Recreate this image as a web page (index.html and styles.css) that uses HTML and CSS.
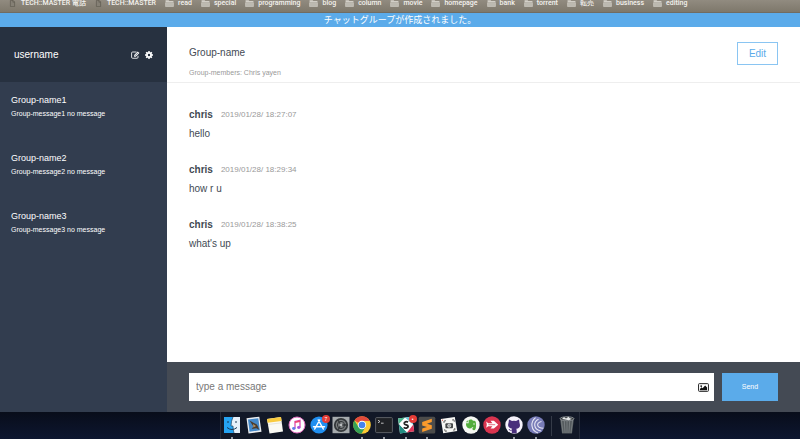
FILE: index.html
```html
<!DOCTYPE html>
<html lang="ja">
<head>
<meta charset="utf-8">
<meta name="viewport" content="width=device-width, initial-scale=1">
<title>ChatSpace</title>
<link rel="stylesheet" href="styles.css">
</head>
<body>
<svg class="defs" aria-hidden="true">
  <symbol id="folder" viewBox="0 0 10 8"><path d="M.5 1.2V.4h3.6l.6.8h4.8V2.4H.5z" fill="#d2cfc7"/><path d="M.5 3h9v4.5h-9z" fill="#bcb9b0" stroke="#dad7cf" stroke-width=".6"/></symbol>
  <symbol id="page" viewBox="0 0 7 9"><path d="M.8.5h3.4l2 2v6H.8z" fill="#858075" stroke="#5e5a50" stroke-width=".9"/><path d="M4 .5v2.3h2.2" fill="none" stroke="#5e5a50" stroke-width=".8"/></symbol>
</svg>

<nav class="bookmarks">
  <a href="#"><svg class="page"><use href="#page"/></svg>TECH::MASTER 電話</a>
  <a href="#"><svg class="page"><use href="#page"/></svg>TECH::MASTER</a>
  <a href="#"><svg><use href="#folder"/></svg>read</a>
  <a href="#"><svg><use href="#folder"/></svg>special</a>
  <a href="#"><svg><use href="#folder"/></svg>programming</a>
  <a href="#"><svg><use href="#folder"/></svg>blog</a>
  <a href="#"><svg><use href="#folder"/></svg>column</a>
  <a href="#"><svg><use href="#folder"/></svg>movie</a>
  <a href="#"><svg><use href="#folder"/></svg>homepage</a>
  <a href="#"><svg><use href="#folder"/></svg>bank</a>
  <a href="#"><svg><use href="#folder"/></svg>torrent</a>
  <a href="#"><svg><use href="#folder"/></svg>転売</a>
  <a href="#"><svg><use href="#folder"/></svg>business</a>
  <a href="#"><svg><use href="#folder"/></svg>editing</a>
</nav>

<p class="flash">チャットグループが作成されました。</p>

<div class="app">
  <aside class="sidebar">
    <header class="user">
      <span class="user-name">username</span>
      <a href="#" aria-label="New group"><svg class="compose-icon" viewBox="0 0 18 16"><path d="M14 9.5v3a2 2 0 0 1-2 2H3.2a2 2 0 0 1-2-2v-8.5a2 2 0 0 1 2-2H11" fill="none" stroke="#fff" stroke-width="1.7"/><path d="M6.2 11.4V8.2L13.6.8l3.3 3.3-7.4 7.3z" fill="#fff"/><path d="m8 9.6 6-6" stroke="#253141" stroke-width="1.3"/></svg></a>
      <a href="#" aria-label="Settings"><svg viewBox="0 0 16 16"><circle cx="8" cy="8" r="4.2" fill="none" stroke="#fff" stroke-width="3.6"/><path d="M8 0v3M8 13v3M0 8h3M13 8h3M2.4 2.4l2 2M11.6 11.6l2 2M2.4 13.6l2-2M11.6 4.4l2-2" stroke="#fff" stroke-width="3"/></svg></a>
    </header>
    <ul class="groups">
      <li><a href="#"><span class="group-name">Group-name1</span><span class="group-message">Group-message1 no message</span></a></li>
      <li><a href="#"><span class="group-name">Group-name2</span><span class="group-message">Group-message2 no message</span></a></li>
      <li><a href="#"><span class="group-name">Group-name3</span><span class="group-message">Group-message3 no message</span></a></li>
    </ul>
  </aside>

  <main class="chat">
    <header class="chat-header">
      <div>
        <h1>Group-name</h1>
        <p class="members">Group-members: Chris yayen</p>
      </div>
      <button type="button" class="edit">Edit</button>
    </header>
    <ul class="messages">
      <li><div class="meta"><span class="sender">chris</span><time>2019/01/28/ 18:27:07</time></div><p>hello</p></li>
      <li><div class="meta"><span class="sender">chris</span><time>2019/01/28/ 18:29:34</time></div><p>how r u</p></li>
      <li><div class="meta"><span class="sender">chris</span><time>2019/01/28/ 18:38:25</time></div><p>what's up</p></li>
    </ul>
    <form class="composer">
      <div class="field">
        <input type="text" aria-label="Message" placeholder="type a message">
        <button type="button" class="picture" aria-label="Attach image"><svg viewBox="0 0 20 16"><rect x="1" y="1" width="18" height="14" rx="1.5" fill="#fff" stroke="#222" stroke-width="1.8"/><circle cx="5.8" cy="5.4" r="1.7" fill="#111"/><path d="M3.5 13v-2.5l3-2.8 1.8 1.6L13 4.5l3.5 3.6V13z" fill="#111"/></svg></button>
      </div>
      <button type="submit" class="send">Send</button>
    </form>
  </main>
</div>

<footer class="desktop">
  <div class="dock">
    <div class="apps">
      <span class="app-icon running"><svg viewBox="0 0 18 18"><path d="M1 1h16v16H1z" fill="#e7f1fa"/><path d="M1 1h9Q8 5 8 10h2q0 4 1 7H1z" fill="#25a4f3"/><path d="M10 1Q8 5 8 10h2q0 4 1 7" fill="none" stroke="#24455f" stroke-width=".7"/><path d="M5 5v2M13 5v2M4 11.5q5 4 10 0" fill="none" stroke="#183650" stroke-width="1"/></svg></span>
      <span class="app-icon"><svg viewBox="0 0 18 18"><path d="M1.5 2.2 14.3.7l2.2 15L3.5 17.5z" fill="#eceff2"/><path d="m3 3.5 10.3-1.2 1.6 12L4.6 15.8z" fill="#4589c8"/><path d="m4.5 4.5 4 2.2 3 1.6 1.2 1.8 1.5 3.6-2.8-1.4-4.6.6 1.6-2.4z" fill="#4b3b2c"/><path d="m8 8 3 2-2.6 1.6z" fill="#b69361"/></svg></span>
      <span class="app-icon"><svg viewBox="0 0 18 18"><path d="m1 3 14-2 2 14.5L3.5 17.5z" fill="#fafaf4"/><path d="m1 3 14-2 .6 4L1.6 6.8z" fill="#f9cb3e"/><path d="m2 8.5 13.5-1.7" stroke="#d7d7cf" stroke-width=".6"/></svg></span>
      <span class="app-icon"><svg viewBox="0 0 18 18"><circle cx="9" cy="9" r="8" fill="#fff" stroke="#e26cc0" stroke-width="1"/><path d="M7 12.5V5.4l5-1.1v7.2" fill="none" stroke="#dc4aae" stroke-width="1.3"/><path d="M7 6.3l5-1.1" stroke="#ed456d" stroke-width="1.6"/><ellipse cx="5.8" cy="12.5" rx="1.7" ry="1.4" fill="#637bea"/><ellipse cx="10.8" cy="11.5" rx="1.7" ry="1.4" fill="#a850db"/></svg></span>
      <span class="app-icon"><svg viewBox="0 0 18 18"><circle cx="9" cy="9" r="8.6" fill="#208ff0"/><path d="m9.7 4-5 9M8.3 4l5 9M3.5 10.8h11" stroke="#fff" stroke-width="1.5" stroke-linecap="round"/></svg><span class="badge">7</span></span>
      <span class="app-icon"><svg viewBox="0 0 18 18"><path d="M.5.8h17v16.4H.5z" fill="#a6abae"/><circle cx="9" cy="9" r="6.2" fill="#777b7d" stroke="#34383b" stroke-width="1.8"/><circle cx="9" cy="9" r="3.6" fill="none" stroke="#33373a" stroke-width="1"/><path d="M9 9h6M9 9 6 4M9 9l-3 5" stroke="#33373a" stroke-width="1.3"/><circle cx="9" cy="9" r="1.4" fill="#b9bcbe"/></svg></span>
      <span class="app-icon running"><svg viewBox="0 0 18 18"><circle cx="9" cy="9" r="8.8" fill="#fbc933"/><path d="M9 9 1.4 4.6A8.8 8.8 0 0 1 16.8 5H9z" fill="#e24a3b"/><path d="M1.4 4.6A8.8 8.8 0 0 0 8.4 17.8L12.5 11 9 9 5.5 11z" fill="#35a156"/><circle cx="9" cy="9" r="4.2" fill="#fff"/><circle cx="9" cy="9" r="3.3" fill="#4483ed"/></svg></span>
      <span class="app-icon running"><svg viewBox="0 0 18 18"><rect x=".6" y="1.6" width="16.8" height="15" rx="1" fill="#202226" stroke="#6b6f73" stroke-width=".8"/><path d="m3 4.2 2 1.3-2 1.3M6 7.2h2.6" fill="none" stroke="#e6e6e6" stroke-width=".8"/></svg></span>
      <span class="app-icon running"><svg viewBox="0 0 18 18"><path d="m1 2.5 14-1.8 2.2 14.6L3 17.4z" fill="#fff"/><path d="m1 2.5 7-.9L1.8 8z" fill="#4db48d"/><path d="m1.8 8 1.2 9.4 7-1z" fill="#238e83"/><path d="m10 16.4 7.2-1.1-1-6.6z" fill="#df3659"/><path d="m8 1.6 7-.9 1.2 8z" fill="#67c4d5"/><path d="m9 3 6 6-6 6-6-6z" fill="#fff"/><path d="M11 6.2C9.5 5 6.8 5.8 7.3 7.7c.5 1.6 3.6.8 3.8 2.6.1 2-3 2.3-4.4 1" fill="none" stroke="#222" stroke-width="1.8"/></svg><span class="badge">•</span></span>
      <span class="app-icon running"><svg viewBox="0 0 18 18"><rect x=".7" y=".8" width="16.6" height="16.6" rx="1.5" fill="#4c4c4b"/><path d="m4.2 6.1 9.6-3.4v3.4L9 7.7l4.8 1.6v3.4l-9.6 3.2v-3.3L9 11 4.2 9.5z" fill="#fb9a2c"/></svg></span>
      <span class="app-icon"><svg viewBox="0 0 18 18"><path d="m.8 3 14-2 2.4 14-14 2.2z" fill="#f7f7f5"/><path d="M4 7V5l2-.3M12 4l2-.2.3 2M14.7 12l.3 1.8-2 .3M7 15l-2 .2-.3-2" fill="none" stroke="#555" stroke-width=".9"/><rect x="5.4" y="7.2" width="7.6" height="5" rx="1" fill="#454849"/><circle cx="9.2" cy="9.7" r="1.6" fill="#a1a4a5" stroke="#fff" stroke-width=".6"/><circle cx="2.5" cy="4.2" r=".6" fill="#df5745"/></svg></span>
      <span class="app-icon"><svg viewBox="0 0 18 18"><circle cx="9" cy="9" r="8.7" fill="#f6f8f4"/><path d="M4 7.2h2.6V4.3C8.3 3 10.5 3.8 10.9 4.8c2.5 0 3 .5 3.1 3.2.2 3-.2 6-1.7 6.2-2.6.4-2.3-2.8-.5-2.6-1.8-1-2-.1-2.4.7-1.5.4-5.7.3-5.4-5.1z" fill="#52ad3d"/><path d="m3.8 6.2 2-2v2z" fill="#52ad3d"/><circle cx="12" cy="8" r=".7" fill="#fff"/></svg></span>
      <span class="app-icon"><svg viewBox="0 0 18 18"><circle cx="9" cy="9" r="8.7" fill="#d9344f"/><path d="M7.5 4.8h3.4l4.3 3.9-4.3 3.9H7.5l1.9-2.4H5.2l-2 1.6.6-3.1-.6-3.1 2 1.6h4.2z" fill="#fff"/><path d="M5.4 8.7h6.8" stroke="#d9344f" stroke-width=".7"/></svg></span>
      <span class="app-icon running"><svg viewBox="0 0 18 18"><circle cx="9" cy="9" r="8.7" fill="#f5f1fa"/><path d="M4 3.5 7 5q2-.5 4 0l3-1.5.5 3.4c1.4 3.7-.4 5.6-3.2 5.9.5 1 .4 2.5.4 4.4H6.8v-2.6c-2 .4-2.8-.5-3.2-1.6l1.2.2c.7 1.2 1.4.7 2 .6q0-.6.4-1.1C4.2 12.4 2.2 10.6 3.5 7z" fill="#492f7c"/></svg></span>
      <span class="app-icon running"><svg viewBox="0 0 18 18"><circle cx="9" cy="9" r="8.7" fill="#787cb8"/><path d="M8.6 1.6C3 5.8 3.8 14.8 11 17M11.5 3.2C6 6 6.2 13.4 14 15M14.5 5.5C9 6.8 9.2 12 16.3 12.3" fill="none" stroke="#e8e8f5" stroke-width="1.1"/></svg></span>
    </div>
    <span class="divider"></span>
    <span class="app-icon"><svg viewBox="0 0 18 18"><path d="M2 2h14l-2 15.5H4z" fill="#555b5e"/><path d="M3.3 3.5 5 17M6.3 5l.8 12M9 5v12M11.7 5l-.8 12M14.7 3.5 13 17" stroke="#858b8e" stroke-width=".7"/><ellipse cx="9" cy="2.7" rx="7" ry="2" fill="#33383b" stroke="#969b9e" stroke-width=".8"/><path d="m4 3 2-2 2 1.4L10.5.7 12 2.3l2 .4-3 1.5z" fill="#e5e7e7"/></svg></span>
  </div>
</footer>
</body>
</html>
```
FILE: styles.css
```css
* { box-sizing: border-box; }

body {
  margin: 0;
  min-height: 100vh;
  display: flex;
  flex-direction: column;
  background: #0c142b;
  color: #434a54;
  font-family: "Liberation Sans", "Noto Sans CJK JP", sans-serif;
  font-size: 10px;
  line-height: 16px;
}

h1, p, ul { margin: 0; padding: 0; font-size: inherit; font-weight: 400; }
ul { list-style: none; }
a { color: inherit; text-decoration: none; }
svg { display: block; }
button, input { font: inherit; border: 0; border-radius: 0; padding: 0; }
.defs { position: absolute; width: 0; height: 0; }

.bookmarks {
  height: 13px;
  padding-left: 9px;
  display: flex;
  gap: 9px;
  overflow: hidden;
  background: linear-gradient(#918b80, #7e786b);
  border-bottom: 1px solid #716c62;
  color: #f4f2ee;
  font-family: Roboto, "Noto Sans CJK JP", sans-serif;
  font-size: 7px;
  font-weight: 500;
  line-height: 7px;
  white-space: nowrap;
}
.bookmarks a { display: flex; gap: 4px; height: 7px; }
.bookmarks svg { width: 9px; height: 7px; }
.bookmarks .page { width: 7px; height: 7px; margin-right: 1px; }

.flash {
  background: #5babea;
  color: #fff;
  text-align: center;
  font-size: 9px;
  line-height: 14px;
}

.app { flex: 1; display: flex; }

.sidebar { flex: 0 0 167px; background: #323d4f; color: #fff; }
.user {
  height: 55px;
  padding: 0 14px;
  display: flex;
  align-items: center;
  gap: 5px;
  background: #273140;
}
.user-name { flex: 1; }
.user svg { width: 8px; height: 8px; }
.user .compose-icon { width: 9px; }
.groups { padding: 11px; display: grid; gap: 32px; }
.groups a { display: grid; gap: 2px; }
.group-name { font-size: 9px; line-height: 14px; }
.group-message { font-size: 7px; line-height: 10px; }

.chat { flex: 1; display: flex; flex-direction: column; background: #fff; }
.chat-header {
  height: 56px;
  padding: 15px 22px 0;
  display: flex;
  justify-content: space-between;
  align-items: flex-start;
  border-bottom: 1px solid #eee;
}
.chat-header h1 { padding-top: 3px; }
.members { padding-top: 7px; color: #999; font-size: 7px; line-height: 10px; }
.edit {
  width: 41px;
  height: 23px;
  border: 1px solid #8ac5f2;
  background: #fff;
  color: #5babea;
}
.messages { flex: 1; padding: 24px 22px; display: flex; flex-direction: column; gap: 20px; }
.messages li { display: grid; gap: 3px; }
.meta { display: flex; gap: 8px; }
.sender { font-weight: 700; }
.meta time { color: #999; font-size: 8px; }

.composer {
  padding: 11px 22px;
  display: flex;
  gap: 8px;
  background: #444a54;
}
.field { flex: 1; display: flex; align-items: center; height: 28px; padding: 0 5px 0 7px; background: #fff; }
.field input { flex: 1; min-width: 0; outline: 0; background: none; color: #434a54; }
.field input::placeholder { color: #777; opacity: 1; }
.picture { background: none; }
.picture svg { width: 11px; height: 9px; }
.send { width: 56px; height: 28px; background: #5babea; color: #fff; font-size: 7px; }

.desktop { height: 27px; display: flex; justify-content: center; background: linear-gradient(#080d1a, #0d1630); }
.dock {
  width: 360px;
  padding: 4px 3px 0 2px;
  display: flex;
  gap: 6px;
  background: #121827;
  border-left: 1px solid #252b3a;
  border-right: 1px solid #252b3a;
}
.apps { flex: 1; display: flex; justify-content: space-between; }
.app-icon { position: relative; width: 18px; height: 23px; }
.app-icon svg { width: 18px; height: 18px; }
.running::after {
  content: "";
  position: absolute;
  left: 8px;
  bottom: 0;
  width: 2px;
  height: 2px;
  border-radius: 50%;
  background: #c2c6ce;
}
.badge {
  position: absolute;
  top: -1px;
  right: -2px;
  width: 8px;
  height: 8px;
  border-radius: 50%;
  background: #e43d37;
  color: #fff;
  font-size: 5px;
  line-height: 8px;
  text-align: center;
}
.divider { width: 1px; height: 20px; background: #353b48; }
```
